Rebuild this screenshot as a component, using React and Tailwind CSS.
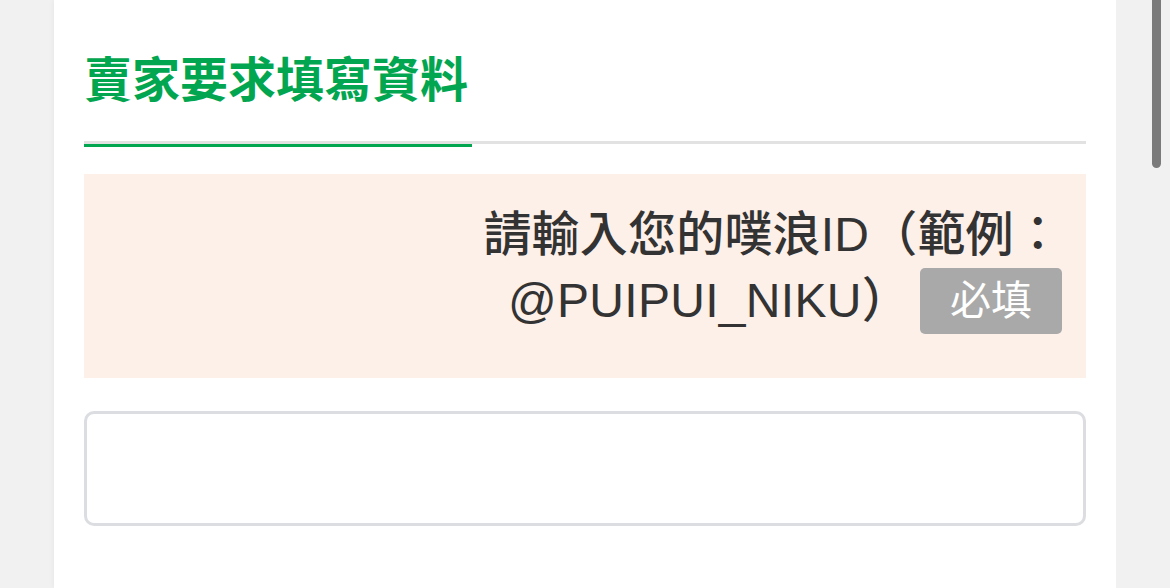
import React from 'react';

const FONT = { fontFamily: '"Liberation Sans", "Noto Sans CJK TC", sans-serif' };

const RequiredBadge = () => (
  <span className="ml-[10px] inline-flex h-[66px] items-center rounded-[5px] bg-[#a9a9a9] px-[30px] align-middle text-[41px] font-normal leading-none text-white">
    必填
  </span>
);

export default function App() {
  return (
    <div className="relative flex h-[588px] w-[1170px] overflow-hidden bg-[#f0f1f0]" style={FONT}>
      <div className="w-[54px] shrink-0 bg-[#f0f1f0]" />
      <div className="w-[1062px] shrink-0 bg-white px-[30px] shadow-[0_0_6px_rgba(0,0,0,0.06)]">
        <div className="pt-[45px] text-[48px] font-bold leading-[72px] text-[#03a650]">
          賣家要求填寫資料
        </div>
        <div className="mt-[24px] h-[3px] w-full bg-[#e2e2e2]" />
        <div className="h-[3px] w-[388px] bg-[#03a650]" />

        <div className="mt-[27px] bg-[#fdf0e9] pb-[44px] pl-[24px] pr-[24px] pt-[28px] text-right text-[48px] font-medium leading-[66px] text-[#333333]">
          <div className="tracking-[0.2px]">請輸入您的噗浪ID（範例：</div>
          <div className="flex items-center justify-end">
            <span className="tracking-[0.3px]">@PUIPUI_NIKU）</span>
            <RequiredBadge />
          </div>
        </div>

        <div className="mt-[33px] h-[115px] w-full rounded-[10px] border-[3px] border-[#dcdde1] bg-white" />
      </div>
      <div className="flex-1 bg-[#f0f1f0]" />
      <div className="absolute right-[9px] top-0 h-[168px] w-[9px] rounded-b-full bg-[#7b7b7b]" />
    </div>
  );
}
